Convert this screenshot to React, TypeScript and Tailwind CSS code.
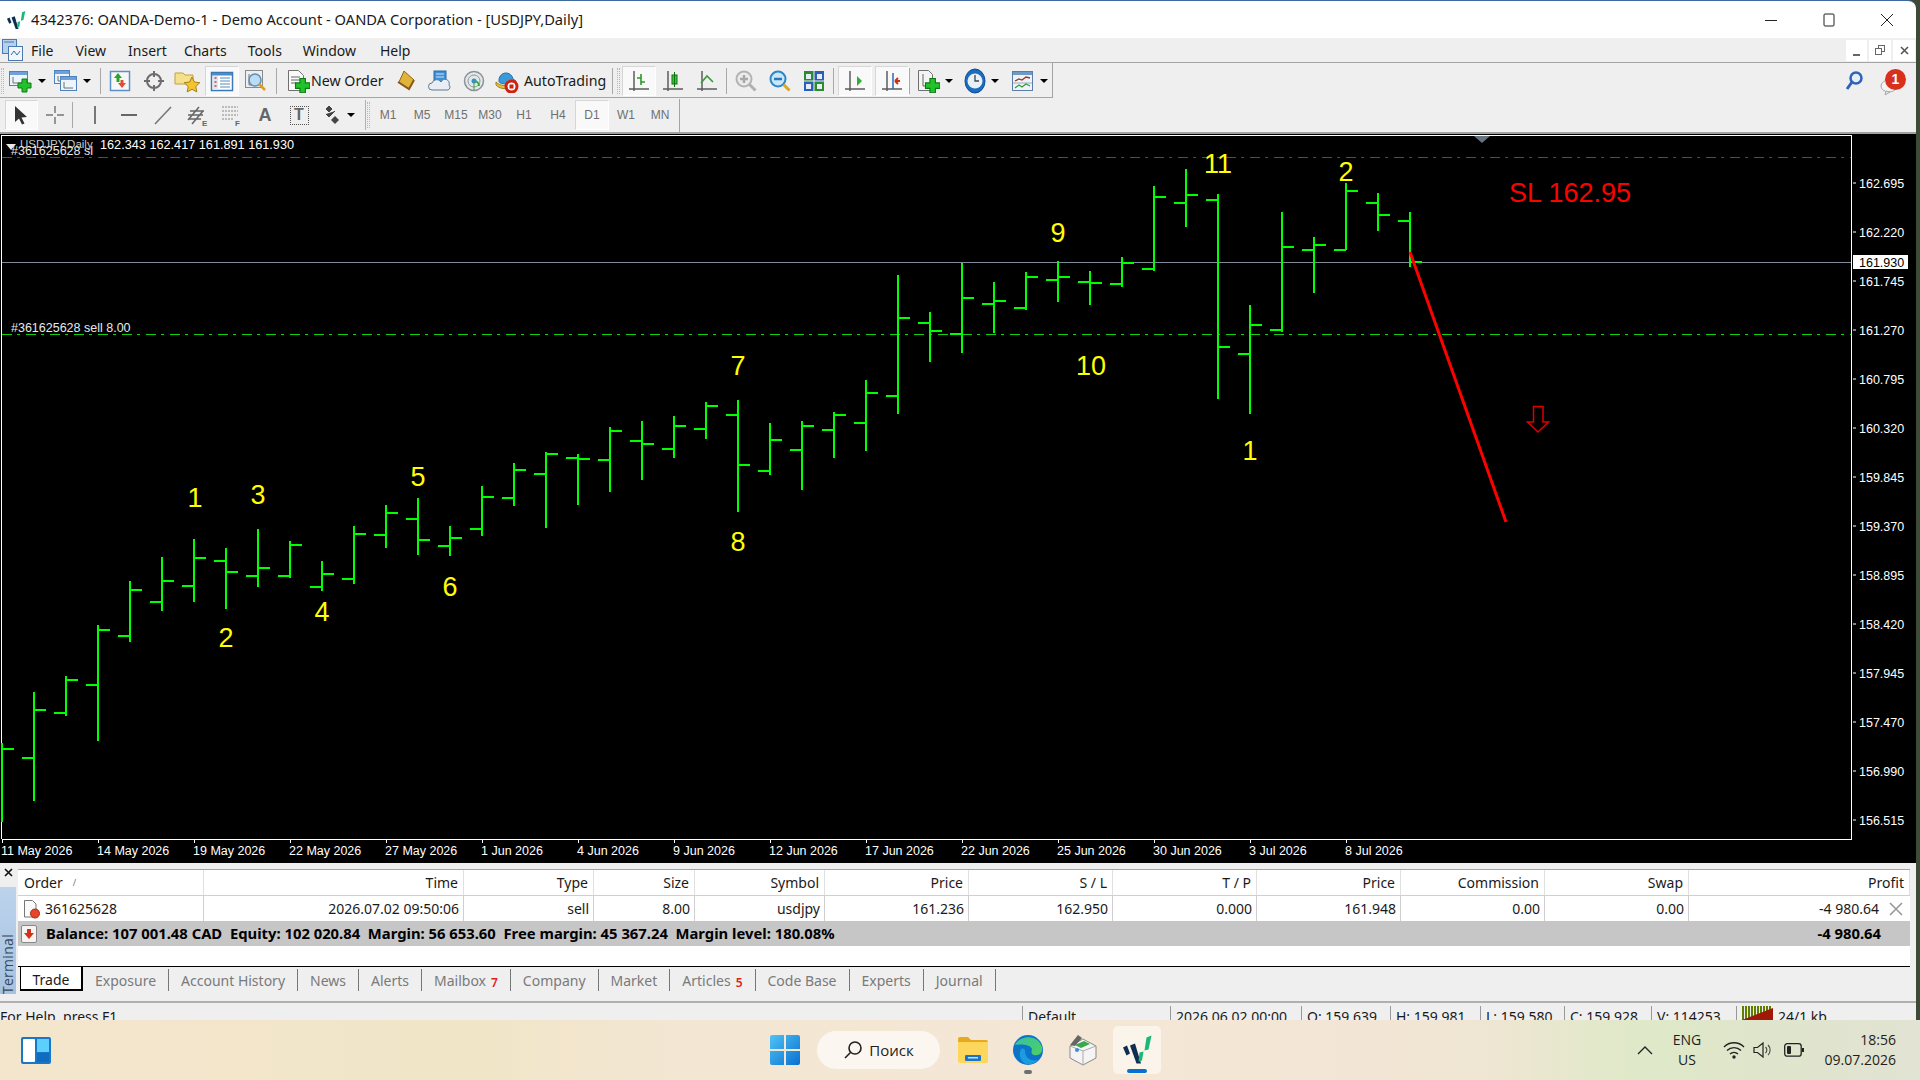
import React from "react";

const BARS: number[][] = [
  [743, 822, 0, 749], [692, 801, 758, 710], [676, 716, 713, 680], [625, 741, 685, 630], [581, 642, 636, 590],
  [557, 611, 602, 581], [539, 602, 586, 558], [548, 609, 561, 572], [529, 587, 576, 568], [541, 578, 576, 545],
  [561, 591, 587, 574], [526, 584, 579, 534], [505, 548, 535, 513], [498, 555, 519, 540], [526, 556, 546, 538],
  [486, 536, 529, 497], [463, 506, 498, 470], [452, 528, 474, 454], [454, 505, 458, 459], [427, 492, 460, 431],
  [421, 480, 441, 444], [416, 458, 449, 426], [402, 439, 429, 406], [400, 512, 415, 465], [423, 475, 471, 440],
  [421, 490, 450, 426], [412, 458, 430, 415], [380, 451, 423, 393], [275, 414, 396, 318], [312, 362, 323, 331],
  [263, 353, 334, 298], [282, 333, 304, 301], [272, 310, 308, 277], [261, 302, 280, 277], [271, 305, 282, 283],
  [257, 287, 284, 263], [186, 271, 269, 197], [169, 227, 203, 195], [194, 399, 200, 347], [305, 414, 354, 325],
  [212, 332, 330, 247], [237, 293, 250, 245], [183, 250, 250, 191], [193, 231, 203, 215], [212, 267, 221, 262],
];
const PRICES = ["162.695", "162.220", "161.745", "161.270", "160.795", "160.320", "159.845", "159.370", "158.895", "158.420", "157.945", "157.470", "156.990", "156.515"];
const DATES = ["11 May 2026", "14 May 2026", "19 May 2026", "22 May 2026", "27 May 2026", "1 Jun 2026", "4 Jun 2026", "9 Jun 2026", "12 Jun 2026", "17 Jun 2026", "22 Jun 2026", "25 Jun 2026", "30 Jun 2026", "3 Jul 2026", "8 Jul 2026"];
const MARKS: [string, number, number][] = [
  ["1", 195, 497], ["3", 258, 494], ["5", 418, 476], ["2", 226, 637], ["4", 322, 611], ["6", 450, 586], ["7", 738, 365], ["8", 738, 541],
  ["9", 1058, 232], ["10", 1091, 365], ["11", 1218, 163], ["1", 1250, 450], ["2", 1346, 171],
];

function Chart() {
  const f = "Liberation Sans, sans-serif";
  return (
    <svg viewBox="0 134 1916 729" width={1916} height={729} className="block">
      <rect x="0" y="134" width="1916" height="729" fill="#000" />
      <path d="M1.5 839V135.5H1851.5V839.5H1.5" fill="none" stroke="#fff" strokeWidth="1" shapeRendering="crispEdges" />
      <path d="M1474 136h16l-8 7z" fill="#66727f" />
      <line x1="2" y1="157.5" x2="1851" y2="157.5" stroke="#e01010" strokeDasharray="10 5 3 6" />
      <line x1="2" y1="334.5" x2="1851" y2="334.5" stroke="#10d010" strokeDasharray="10 5 3 6" />
      <line x1="2" y1="262.5" x2="1851" y2="262.5" stroke="#7f8a9a" />
      <g shapeRendering="crispEdges" fill="#00ff00">
        {BARS.map((b, i) => {
          const x = 2 + 32 * i;
          return (
            <g key={i}>
              <rect x={x - 1} y={b[0]} width="2" height={b[1] - b[0]} />
              {b[2] > 0 && <rect x={x - 12} y={b[2] - 1} width="12" height="2" />}
              <rect x={x} y={b[3] - 1} width="12" height="2" />
            </g>
          );
        })}
      </g>
      <line x1="1410" y1="252" x2="1506" y2="522" stroke="#ff0000" strokeWidth="3" />
      <path d="M1533.5 406.5h9.5v15.5h5.5l-10.5 10-10.5-10h6z" fill="none" stroke="#e00000" strokeWidth="1.5" />
      <path d="M6 144h10l-5 6z" fill="#e8e8e8" />
      <text x="20" y="148" fontFamily={f} fontSize="11.5" fill="#c8c8c8">USDJPY,Daily</text>
      <text x="100" y="149" fontFamily={f} fontSize="12.7" fill="#fff">162.343 162.417 161.891 161.930</text>
      <text x="11" y="155" fontFamily={f} fontSize="12.5" fill="#e8e8e8">#361625628 sl</text>
      <text x="11" y="332" fontFamily={f} fontSize="12.5" fill="#e8e8e8">#361625628 sell 8.00</text>
      {PRICES.map((p, i) => (
        <g key={p}>
          <rect x="1853" y={182.5 + 49 * i} width="3" height="1" fill="#fff" />
          <text x="1859" y={188 + 49 * i} fontFamily={f} fontSize="12.5" fill="#fff">{p}</text>
        </g>
      ))}
      <rect x="1853" y="255" width="55" height="14" fill="#fff" />
      <text x="1859" y="267" fontFamily={f} fontSize="12.5" fill="#000">161.930</text>
      {DATES.map((d, i) => (
        <g key={d}>
          <rect x={2 + 96 * i} y="839" width="1" height="4" fill="#fff" />
          <text x={1 + 96 * i} y="855" fontFamily={f} fontSize="12.5" fill="#fff">{d}</text>
        </g>
      ))}
      {MARKS.map(([t, x, y], i) => (
        <text key={i} x={x} y={y + 10} textAnchor="middle" fontFamily={f} fontSize="27" fill="#ffff00">{t}</text>
      ))}
      <text x="1509" y="202" fontFamily={f} fontSize="27" fill="#ff0000">SL 162.95</text>
    </svg>
  );
}

const Ic = ({ children, w = 24, h = 24 }: { children: React.ReactNode; w?: number; h?: number }) => (
  <svg width={w} height={h} viewBox={`0 0 ${w} ${h}`} className="block shrink-0">{children}</svg>
);
const Plus = ({ x, y, s = 1 }: { x: number; y: number; s?: number }) => (
  <g transform={`translate(${x} ${y}) scale(${s})`}>
    <path d="M4 0h5v4h4v5H9v4H4V9H0V4h4z" fill="#22c22a" stroke="#0b7a12" strokeWidth="1" />
  </g>
);
const Win = ({ x, y, w, h }: { x: number; y: number; w: number; h: number }) => (
  <g>
    <rect x={x + 0.5} y={y + 0.5} width={w} height={h} fill="#eef4fb" stroke="#4d82c0" />
    <rect x={x + 1} y={y + 1} width={w - 1} height="3" fill="#6fa0d8" />
    <path d={`M${x + 4} ${y + 6}v${h - 8}h${w - 7}`} fill="none" stroke="#707070" />
  </g>
);
const Drop = () => <span className="block shrink-0 ml-[5px] w-0 h-0 border-x-[4px] border-x-transparent border-t-[4px] border-t-black" />;

const IconNewChart = () => <Ic><Win x={0} y={2} w={18} h={14} /><Plus x={9} y={10} /></Ic>;
const IconProfiles = () => <Ic><Win x={0} y={1} w={15} h={13} /><Win x={6} y={7} w={16} h={14} /></Ic>;
const IconMarket = () => (
  <Ic><rect x="2.5" y="2.5" width="19" height="19" fill="#f7f7f7" stroke="#5d90c8" strokeWidth="1.5" /><path d="M10 4l4 5h-2.5v4h-3V9H6z" fill="#2aa52a" /><path d="M14 19l-4-5h2.5v-3h3v3H18z" fill="#e05030" /></Ic>
);
const IconCross = () => (
  <Ic><circle cx="12" cy="12" r="7" fill="none" stroke="#6c6c6c" strokeWidth="2" /><path d="M12 2v6M12 16v6M2 12h6M16 12h6" stroke="#6c6c6c" strokeWidth="2" /></Ic>
);
const IconNavigator = () => (
  <Ic w={28}><path d="M1 4h8l2 2h8v9H1z" fill="#f5e18c" stroke="#c0a040" /><path d="M18 8l2.4 5 5.4.7-4 3.8 1 5.4-4.8-2.6-4.8 2.6 1-5.4-4-3.8 5.4-.7z" fill="#f4c430" stroke="#a88010" /></Ic>
);
const IconTerminal = () => (
  <Ic><rect x="1.5" y="3.5" width="21" height="18" fill="#fff" stroke="#3c78b8" strokeWidth="1.5" /><rect x="2" y="4" width="20" height="2.5" fill="#4d8ac8" /><rect x="3" y="7" width="5" height="14" fill="#dde8f4" /><path d="M4.5 9h2M4.5 13h2M4.5 17h2" stroke="#d04030" strokeWidth="1.5" /><path d="M10 9h10M10 12h10M10 15h10M10 18h10" stroke="#5a8cc0" /></Ic>
);
const IconTester = () => (
  <Ic><rect x="1.5" y="1.5" width="17" height="17" fill="#eee" stroke="#8a8a8a" /><path d="M5 5v11h11" fill="none" stroke="#777" /><circle cx="11" cy="11" r="6" fill="#bcdcf4" stroke="#5b8fbf" strokeWidth="1.5" /><path d="M15 15l6 6" stroke="#d8a020" strokeWidth="2.5" /></Ic>
);
const IconOrder = () => (
  <Ic><path d="M2.5 1.5h10l5 5v15h-15z" fill="#fafafa" stroke="#707070" /><path d="M5 8h9M5 11h9M5 14h5" stroke="#666" /><Plus x={9.5} y={9.5} s={1.1} /></Ic>
);
const IconGold = () => (
  <Ic><path d="M10 2l10 9-5 9-10-7z" fill="#e2b33a" stroke="#8a6a18" /><path d="M4 13l11 7 5-9" fill="none" stroke="#8a5a18" strokeWidth="2" /></Ic>
);
const IconSignals = () => (
  <Ic><rect x="6" y="2" width="12" height="13" fill="#3d8fd8" stroke="#2a6aa8" /><path d="M8 5h8M8 8h8" stroke="#cde4f8" /><path d="M4 21a3.5 3.5 0 010-7 5 5 0 019-1 4 4 0 018 3 3 3 0 01-1 5z" fill="#e8eef4" stroke="#5c7a94" /></Ic>
);
const IconRadar = () => (
  <Ic><circle cx="12" cy="12" r="9.5" fill="#e4e8ea" stroke="#8a9296" strokeWidth="1.5" /><circle cx="12" cy="12" r="6" fill="none" stroke="#8a9aa0" /><path d="M12 12A5 5 0 0117 17" fill="none" stroke="#38a838" strokeWidth="2" /><circle cx="12" cy="12" r="2.5" fill="#3a90c8" /><path d="M12 12v9" stroke="#38a838" /></Ic>
);
const IconAuto = () => (
  <Ic w={26}><path d="M5 12a7 7 0 0114-2l3 2c0 4-18 4-17 0z" fill="#3d9ad8" stroke="#2a70a8" /><path d="M2 13c5 5 15 5 20 0v3c-4 5-16 5-20 0z" fill="#e8c040" stroke="#a08020" /><circle cx="17.5" cy="17.5" r="5.5" fill="#fff" stroke="#d02010" strokeWidth="3" /><rect x="15.5" y="15.5" width="4" height="4" fill="#d02010" /></Ic>
);
const Axes = ({ children }: { children?: React.ReactNode }) => (
  <Ic><path d="M7 2v20M2 20h20M7 22v-2" stroke="#5c5c5c" strokeWidth="1.5" fill="none" />{children}</Ic>
);
const IconZoom = ({ plus, blue }: { plus?: boolean; blue?: boolean }) => (
  <Ic><circle cx="10" cy="10" r="7.5" fill={blue ? "#c8e8f8" : "#ececec"} stroke={blue ? "#2c86c8" : "#b4b4b4"} strokeWidth="2" /><path d="M6 10h8" stroke={blue ? "#2c76b8" : "#a8a8a8"} strokeWidth="2.5" />{plus && <path d="M10 6v8" stroke="#a8a8a8" strokeWidth="2.5" />}<path d="M15.5 15.5l6 6" stroke={blue ? "#d8a828" : "#b0b0b0"} strokeWidth="3" /></Ic>
);
const IconTile = () => (
  <Ic><rect x="2" y="2" width="9.5" height="9.5" fill="#2e8a2e" /><rect x="12.5" y="2" width="9.5" height="9.5" fill="#2c5ec0" /><rect x="2" y="12.5" width="9.5" height="9.5" fill="#2c5ec0" /><rect x="12.5" y="12.5" width="9.5" height="9.5" fill="#2e8a2e" /><path d="M4 5h5v5H4zM15 5h5v5h-5zM4 15h5v5H4zM15 15h5v5h-5z" fill="#e4eef8" /></Ic>
);
const IconIndicators = () => (
  <Ic><path d="M2.5 1.5h10l4 4v16h-14z" fill="#f4f4f4" stroke="#707070" /><path d="M7 5v12h8" fill="none" stroke="#666" /><Plus x={9.5} y={9.5} s={1.1} /></Ic>
);
const IconClock = () => (
  <Ic w={22} h={26}><ellipse cx="11" cy="13" rx="10" ry="12" fill="#1c6cc0" stroke="#0e4a90" /><circle cx="11" cy="13" r="7.5" fill="#e8f0f8" /><path d="M11 7v6h4" fill="none" stroke="#444" strokeWidth="1.3" /></Ic>
);
const IconTemplate = () => (
  <Ic><rect x="1.5" y="2.5" width="20" height="19" fill="#eef3f8" stroke="#5a7ea8" /><rect x="2" y="3" width="19" height="3" fill="#6f9ac8" /><path d="M4 12l4-2 3 1 4-3 4 1" fill="none" stroke="#a03020" strokeWidth="1.3" /><path d="M2 14h19" stroke="#9ab" /><path d="M4 19l4-3 3 2 4-3 4 2" fill="none" stroke="#3a9a3a" strokeWidth="1.3" /></Ic>
);
const Logo = ({ w, h }: { w: number; h: number }) => (
  <svg width={w} height={h} viewBox="0 0 30 28" className="block">
    <path d="M1 12l4-2 3 8-3.500 2z" fill="#0f2d52" />
    <path d="M8 10l5-2 6 20h-4.500z" fill="#0f2d52" />
    <path d="M17.500 17l4-1-1.500 9-3.500 1z" fill="#18b878" />
    <path d="M24.500 2l5-2-3 14-4 1z" fill="#18b878" />
  </svg>
);

const grip = <span className="w-[3px] h-[26px] mx-[1px] shrink-0 border-x border-dotted border-[#b8b8b8]" />;
const Btn = ({ children, pressed }: { children: React.ReactNode; pressed?: boolean }) => (
  <span className={`w-[34px] h-[30px] shrink-0 flex items-center justify-center ${pressed ? "bg-[#f9f9f9] border border-[#d6d6d6] border-b-white border-r-white" : ""}`}>{children}</span>
);
const Sep = () => <span className="block w-px h-[26px] bg-[#a8a8a8] shrink-0" />;
const ui = "font-['Noto_Sans',sans-serif]";

const MENU: [string, string][] = [["File", "ml-[8px]"], ["View", "ml-[22px]"], ["Insert", "ml-[22px]"], ["Charts", "ml-[17px]"], ["Tools", "ml-[21px]"], ["Window", "ml-[21px]"], ["Help", "ml-[24px]"]];

function Title() {
  return (
    <div className={`h-[37px] bg-white flex items-center shrink-0 ${ui} text-[14.7px] text-[#1a1a1a]`}>
      <span className="ml-[6px] mr-[5px]"><Logo w={20} h={18} /></span>
      <span>4342376: OANDA-Demo-1 - Demo Account - OANDA Corporation - [USDJPY,Daily]</span>
      <span className="ml-auto flex items-center h-full">
        <span className="w-[58px] flex justify-center"><svg width="12" height="12"><path d="M0 6.5h12" stroke="#222" /></svg></span>
        <span className="w-[58px] flex justify-center"><svg width="12" height="14"><rect x="1" y="1" width="10" height="12" rx="1" fill="none" stroke="#222" /></svg></span>
        <span className="w-[58px] flex justify-center"><svg width="14" height="14"><path d="M1 1l12 12M13 1L1 13" stroke="#222" /></svg></span>
      </span>
    </div>
  );
}

function Menu() {
  return (
    <div className={`h-[25px] bg-[#efefef] border-b border-[#a4a4a4] flex items-center shrink-0 ${ui} text-[14px] text-[#1a1a1a]`}>
      <svg width="21" height="22" viewBox="0 0 21 22" className="ml-[2px] shrink-0">
        <rect x="0.5" y="0.5" width="14" height="14" fill="#b6d0ee" stroke="#4a78b0" />
        <path d="M2 3h10" stroke="#4a78b0" />
        <rect x="6.5" y="7.5" width="14" height="14" fill="#f0f6fc" stroke="#4a78b0" />
        <path d="M9 16l3-4 3 4 3-4" fill="none" stroke="#3a6aa8" />
      </svg>
      {MENU.map(([t, m]) => <span key={t} className={m}>{t}</span>)}
      <span className="ml-auto flex gap-[2px] mr-[1px]">
        <span className="w-[21px] h-[21px] bg-white flex items-end justify-center pb-[5px]"><span className="w-[7px] h-[2px] bg-[#666]" /></span>
        <span className="w-[22px] h-[21px] bg-white flex items-center justify-center"><svg width="10" height="10"><rect x="3.5" y="0.5" width="6" height="6" fill="none" stroke="#666" /><rect x="0.5" y="3.5" width="6" height="6" fill="#fff" stroke="#666" /></svg></span>
        <span className="w-[22px] h-[21px] bg-white flex items-center justify-center"><svg width="9" height="9"><path d="M1 1l7 7M8 1L1 8" stroke="#555" strokeWidth="1.6" /></svg></span>
      </span>
    </div>
  );
}

function ToolbarTop() {
  return (
    <div className="h-[35px] bg-[#efefef] flex shrink-0">
      <div className={`w-[1053px] h-[35px] pt-[1px] border-b border-r border-[#a4a4a4] flex items-center shrink-0 ${ui} text-[14.2px] text-[#1a1a1a]`}>
        <span className="w-[7px] shrink-0 flex">{grip}</span>
        <span className="w-[39px] pl-[2px] flex items-center shrink-0"><IconNewChart /><Drop /></span>
        <span className="w-[38px] ml-[8px] flex items-center shrink-0"><IconProfiles /><Drop /></span>
        <span className="w-[11px] flex justify-end pr-[2px] shrink-0"><Sep /></span>
        <Btn><IconMarket /></Btn><Btn><IconCross /></Btn><Btn><IconNavigator /></Btn>
        <Btn pressed><IconTerminal /></Btn><Btn><IconTester /></Btn>
        <span className="w-[7px] flex justify-center shrink-0"><Sep /></span>
        <span className="w-[101px] ml-[6px] flex items-center shrink-0"><IconOrder /><span className="ml-[1px] whitespace-nowrap">New Order</span></span>
        <span className="ml-[2px] flex"><Btn><IconGold /></Btn><Btn><IconSignals /></Btn><Btn><IconRadar /></Btn></span>
        <span className="w-[115px] flex items-center shrink-0 pl-[3px]"><IconAuto /><span className="ml-[4px] whitespace-nowrap">AutoTrading</span></span>
        <span className="ml-[6px]"><Sep /></span>
        <span className="ml-[3px] w-[6px] flex">{grip}</span>
        <Btn pressed><Axes><path d="M14 5v11M10 9h4M14 13h4" stroke="#2a9a2a" strokeWidth="1.6" /></Axes></Btn>
        <Btn><Axes><rect x="11" y="6" width="5" height="9" fill="#30d030" stroke="#107010" /><path d="M13.5 3v15" stroke="#107010" /></Axes></Btn>
        <Btn><Axes><path d="M6 14l6-7 6 6" fill="none" stroke="#3a9a3a" strokeWidth="1.6" /></Axes></Btn>
        <span className="ml-[2px]"><Sep /></span>
        <span className="ml-[2px] flex"><Btn><IconZoom plus /></Btn><Btn><IconZoom blue /></Btn><Btn><IconTile /></Btn></span>
        <span className="ml-[2px]"><Sep /></span>
        <span className="ml-[4px] flex"><Btn pressed><Axes><path d="M14 7l5 5-5 5z" fill="#30b030" /></Axes></Btn></span>
        <span className="ml-[3px] flex"><Btn pressed><Axes><path d="M13 4v16" stroke="#2a6ab0" strokeWidth="1.5" /><path d="M20 12h-5m0 0l3-3m-3 3l3 3" stroke="#c83010" strokeWidth="1.8" fill="none" /></Axes></Btn></span>
        <Sep />
        <span className="w-[39px] ml-[6px] flex items-center shrink-0"><IconIndicators /><Drop /></span>
        <span className="w-[40px] ml-[9px] flex items-center shrink-0"><IconClock /><Drop /></span>
        <span className="w-[40px] ml-[7px] flex items-center shrink-0"><IconTemplate /><Drop /></span>
      </div>
      <span className="ml-auto flex items-center mr-[8px] gap-[14px]">
        <svg width="20" height="22" viewBox="0 0 20 22"><circle cx="12" cy="8" r="5.5" fill="#e4eef8" stroke="#2f62b8" strokeWidth="2.5" /><path d="M8 12l-5 7" stroke="#2f62b8" strokeWidth="3" /></svg>
        <span className="relative w-[30px] h-[30px] block">
          <svg width="30" height="30" viewBox="0 0 30 30"><ellipse cx="11" cy="20" rx="8" ry="6" fill="#f4f4f4" stroke="#a8a8a8" /><path d="M8 25l-1 4 5-3z" fill="#e8e8e8" stroke="#a8a8a8" /></svg>
          <span className="absolute left-[7px] top-[3px] w-[21px] h-[21px] rounded-full bg-[#d9301e] text-white text-[14px] font-['Liberation_Sans',sans-serif] font-bold flex items-center justify-center">1</span>
        </span>
      </span>
    </div>
  );
}

const TF = ["M1", "M5", "M15", "M30", "H1", "H4", "D1", "W1", "MN"];
function ToolbarBottom() {
  return (
    <div className="h-[36px] bg-[#efefef] border-b-2 border-[#a0a0a0] flex items-center shrink-0 font-['Liberation_Sans',sans-serif]">
      <span className="w-[5px] shrink-0" />
      <span className="w-[33px] h-[30px] shrink-0 flex items-center justify-center pr-[3px] bg-[#f9f9f9] border border-[#d6d6d6] border-b-white border-r-white">
        <Ic w={14} h={20}><path d="M2 1v16l4-3.5 3 6 2.5-1-3-6 5.5-.5z" fill="#333" /></Ic>
      </span>
      <Btn><Ic><path d="M12 3v7M12 14v7M3 12h7M14 12h7" stroke="#777" strokeWidth="1.5" /></Ic></Btn>
      <span className="w-[6px] flex shrink-0"><Sep /></span>
      <Btn><Ic><path d="M12 3v18" stroke="#777" strokeWidth="2" /></Ic></Btn>
      <Btn><Ic><path d="M4 12h16" stroke="#666" strokeWidth="2" /></Ic></Btn>
      <Btn><Ic><path d="M4 21L20 4" stroke="#777" strokeWidth="1.6" /></Ic></Btn>
      <Btn><Ic><path d="M3 17L14 4M7 21L18 8M3 12h15M5 8h14M4 16h12" stroke="#666" strokeWidth="1.5" /><text x="17" y="23" fontSize="8" fontWeight="700" fill="#666">E</text></Ic></Btn>
      <Btn><Ic><path d="M3 4h16M3 8h16M3 12h16M3 16h12" stroke="#888" strokeDasharray="2 1" /><text x="16" y="23" fontSize="8" fontWeight="700" fill="#666">F</text></Ic></Btn>
      <Btn><span className="text-[18px] font-bold text-[#666]">A</span></Btn>
      <Btn><span className="w-[19px] h-[19px] border border-dotted border-[#555] flex items-center justify-center text-[16px] font-bold text-[#666] leading-none">T</span></Btn>
      <span className="w-[44px] flex items-center shrink-0 pl-[8px]"><Ic w={18} h={20}><path d="M5 1l3 3-3 3-3-3zM2 9l3 3 6-6" fill="#444" stroke="#444" /><path d="M11 11l4 4-4 4-4-4z" fill="#444" /></Ic><Drop /></span>
      <span className="w-[5px] shrink-0" />
      <span className="w-px h-[30px] bg-[#b0b0b0] shrink-0" />
      {grip}
      {TF.map((t) => (
        <span key={t} className={`w-[34px] h-[30px] shrink-0 flex items-center justify-center text-[12px] text-[#707070] ${t === "D1" ? "bg-[#f9f9f9] border border-[#d6d6d6] border-b-white border-r-white" : ""}`}>{t}</span>
      ))}
      <span className="w-px h-[33px] bg-[#a4a4a4] ml-[2px]" />
    </div>
  );
}

const COLS = "grid grid-cols-[186px_260px_130px_101px_130px_144px_144px_144px_144px_144px_144px_221px]";
const HEAD = ["Order", "Time", "Type", "Size", "Symbol", "Price", "S / L", "T / P", "Price", "Commission", "Swap", "Profit"];
const ROW = ["2026.07.02 09:50:06", "sell", "8.00", "usdjpy", "161.236", "162.950", "0.000", "161.948", "0.00", "0.00"];
const TABS: [string, string?][] = [["Exposure"], ["Account History"], ["News"], ["Alerts"], ["Mailbox", "7"], ["Company"], ["Market"], ["Articles", "5"], ["Code Base"], ["Experts"], ["Journal"]];

function Terminal() {
  return (
    <div className={`h-[138px] bg-[#efefef] flex shrink-0 ${ui} text-[14px] text-[#1a1a1a]`}>
      <div className="w-[18px] shrink-0 flex flex-col">
        <div className="h-[24px] pt-[5px] pl-[4px]"><svg width="9" height="9"><path d="M1 1l7 7M8 1L1 8" stroke="#111" strokeWidth="1.6" /></svg></div>
        <div className="w-[16px] h-[107px] bg-gradient-to-b from-[#bdd3ec] to-[#a6c2df] flex items-end justify-center">
          <span className="[writing-mode:vertical-rl] rotate-180 text-[#35485e] text-[14px] leading-[16px] tracking-[0.3px] font-['Open_Sans',sans-serif]">Terminal</span>
        </div>
      </div>
      <div className="w-[1892px] shrink-0 flex flex-col pt-[6px]">
        <div className={`${COLS} h-[27px] bg-white border-t border-b border-t-[#a4a4a4] border-b-[#cfcfcf]`}>
          {HEAD.map((h, i) => (
            <div key={i} className={`border-r border-[#e0e0e0] flex items-center ${i === 0 ? "pl-[6px]" : "justify-end pr-[5px]"}`}>
              {h}{i === 0 && <span className="ml-[10px] text-[9px] text-[#777]">/</span>}
            </div>
          ))}
        </div>
        <div className={`${COLS} h-[25px] bg-white`}>
          <div className="border-r border-[#cfcfcf] flex items-center pl-[3px]">
            <svg width="20" height="20" viewBox="0 0 20 20" className="shrink-0"><path d="M3.5 1.5h8l3.500 3.500v13h-11.500z" fill="#fafafa" stroke="#777" /><circle cx="14" cy="14.500" r="4.500" fill="#e8452a" stroke="#a02a14" /></svg>
            <span className="ml-[4px]">361625628</span>
          </div>
          {ROW.map((v, i) => <div key={i} className="border-r border-[#cfcfcf] flex items-center justify-end pr-[4px]">{v}</div>)}
          <div className="flex items-center justify-end pr-[4px]">
            -4 980.64
            <svg width="14" height="14" className="ml-[10px] mr-[3px]"><path d="M1 1l12 12M13 1L1 13" stroke="#999" strokeWidth="1.6" /></svg>
          </div>
        </div>
        <div className="h-[25px] bg-[#c6c6c6] flex items-center font-bold text-[14.8px] text-[#000]">
          <span className="ml-[3px] w-[16px] h-[18px] bg-[#f4f4f4] border border-[#888] rounded-[2px] flex items-center justify-center shrink-0">
            <svg width="10" height="10"><path d="M3 0h4v4h3l-5 6-5-6h3z" fill="#d83018" /></svg>
          </span>
          <span className="ml-[9px] whitespace-pre">{"Balance: 107 001.48 CAD  Equity: 102 020.84  Margin: 56 653.60  Free margin: 45 367.24  Margin level: 180.08%"}</span>
          <span className="ml-auto mr-[29px]">-4 980.64</span>
        </div>
        <div className="h-[21px] bg-white border-b border-black" />
        <div className="h-[26px] flex items-stretch text-[#7a7a7a]">
          <span className="ml-[2px] w-[63px] h-[25px] mt-[-1px] pt-[2px] bg-white border border-black flex items-center justify-center text-[#1a1a1a] border-r-2 border-b-2">Trade</span>
          {TABS.map(([t, n]) => (
            <span key={t} className="flex items-center h-[22px] mt-[2px] pl-[12px] pr-[12px] border-r border-[#777] whitespace-nowrap">
              {t}{n && <span className="ml-[5px] text-[12px] mt-[6px] text-[#e02020] leading-none font-semibold">{n}</span>}
            </span>
          ))}
        </div>
        <div className="flex-1" />
      </div>
    </div>
  );
}

function Status() {
  const cell = "h-full border-l border-[#999] pl-[5px] shrink-0 whitespace-nowrap";
  return (
    <div className={`h-[19px] bg-[#efefef] border-t-2 border-[#b0b0b0] overflow-hidden flex shrink-0 ${ui} text-[14px] text-[#1a1a1a] leading-[19px] pt-[3px]`}>
      <span className="w-[1022px] shrink-0 mt-[1px]">For Help, press F1</span>
      <span className={`${cell} w-[148px]`}><span className="block mt-[1px]">Default</span></span>
      <span className={`${cell} w-[131px]`}><span className="block mt-[1px]">2026.06.02 00:00</span></span>
      <span className={`${cell} w-[89px]`}><span className="block mt-[1px]">O: 159.639</span></span>
      <span className={`${cell} w-[90px]`}><span className="block mt-[1px]">H: 159.981</span></span>
      <span className={`${cell} w-[84px]`}><span className="block mt-[1px]">L: 159.580</span></span>
      <span className={`${cell} w-[87px]`}><span className="block mt-[1px]">C: 159.928</span></span>
      <span className={`${cell} w-[85px]`}><span className="block mt-[1px]">V: 114253</span></span>
      <span className={`${cell} flex`}>
        <svg width="31" height="14" className="shrink-0 mr-[5px]" viewBox="0 0 31 14">
          <path d="M1 0v14M4 0v14M7 0v14M10 0v14M13 0v14M16 0v14M19 0v14M22 0v14M25 0v14M28 0v14" stroke="#5e7f00" strokeWidth="2" />
          <path d="M0 14L31 2V14z" fill="#a01808" />
        </svg>
        <span className="block mt-[1px]">24/1 kb</span>
      </span>
    </div>
  );
}

function Taskbar() {
  return (
    <div className="h-[60px] w-[1920px] shrink-0 flex items-center font-['Open_Sans',sans-serif] text-[#1e1e1e] bg-[linear-gradient(90deg,#f3e6cd_0%,#f1e5c8_25%,#f3e6d2_35%,#f5e7d6_60%,#f3e5d5_72%,#eee6d2_78%,#dfe9c8_85%,#dfe5cc_92%,#e2e3d3_100%)]">
      <span className="ml-[21px] w-[30px] h-[27px] bg-[#1877c8] rounded-[2px] flex p-[2px] gap-[2px] shrink-0">
        <span className="w-[12px] bg-white rounded-[1px]" />
        <span className="flex-1 flex flex-col gap-[1px]"><span className="h-[13px] bg-[#5cd0fa]" /><span className="flex-1 bg-[#0f6cc0]" /></span>
      </span>
      <svg width="30" height="30" viewBox="0 0 30 30" className="ml-[719px] shrink-0">
        <defs><linearGradient id="w" x1="0" y1="0" x2="1" y2="1"><stop offset="0" stopColor="#4fc3f7" /><stop offset="1" stopColor="#0a6fd0" /></linearGradient></defs>
        <path d="M0 2a2 2 0 012-2h12v14H0zM16 0h12a2 2 0 012 2v12H16zM0 16h14v14H2a2 2 0 01-2-2zM16 16h14v12a2 2 0 01-2 2H16z" fill="url(#w)" />
      </svg>
      <span className="ml-[17px] w-[123px] h-[38px] rounded-full bg-[#fbf7f0] flex items-center justify-center shrink-0 text-[15px]">
        <svg width="20" height="20" viewBox="0 0 20 20" className="mr-[6px]"><circle cx="12" cy="8" r="6" fill="none" stroke="#222" strokeWidth="1.6" /><path d="M7.5 12.500L2 18" stroke="#222" strokeWidth="1.6" /></svg>
        Поиск
      </span>
      <svg width="30" height="26" viewBox="0 0 30 26" className="ml-[18px] shrink-0">
        <path d="M0 2a2 2 0 012-2h8l3 3h15a2 2 0 012 2v3H0z" fill="#e8a820" />
        <path d="M0 5h30v19a2 2 0 01-2 2H2a2 2 0 01-2-2z" fill="#fcd75c" />
        <rect x="7" y="18" width="16" height="6" rx="1" fill="#1c74c8" />
        <rect x="10" y="20" width="10" height="1.500" fill="#bfe0fa" />
      </svg>
      <span className="relative ml-[25px] w-[30px] h-[30px] shrink-0 block">
        <svg width="30" height="30" viewBox="0 0 30 30">
          <defs><linearGradient id="e" x1="0" y1="0" x2="1" y2="1"><stop offset="0" stopColor="#38c0a0" /><stop offset="1" stopColor="#50d060" /></linearGradient></defs>
          <circle cx="15" cy="15" r="15" fill="#0c74c8" />
          <path d="M2 10C6 1 24-2 29 12c1 6-3 9-8 8-4-1-2-5-2-6-2-5-12-5-17-4z" fill="url(#e)" />
          <path d="M12 16c0 6 5 11 13 9-3 3-7 5-12 4C8 27 5 20 8 14c1-1 4-1 4 2z" fill="#1c9ce0" />
        </svg>
        <span className="absolute left-[11px] top-[35px] w-[8px] h-[4px] rounded-full bg-[#6f6f6f]" />
      </span>
      <svg width="30" height="32" viewBox="0 0 30 32" className="ml-[25px] shrink-0">
        <path d="M2 12l13-7 13 7v12l-13 7-13-7z" fill="#f4f4f4" stroke="#8a8a8a" />
        <path d="M15 17v14M2 12l13 5 13-5" stroke="#aaa" fill="none" />
        <path d="M7 11l9-4 6 3-9 4z" fill="#3aa84a" />
        <path d="M2 11L10 1l4 3-7 8z" fill="#666" />
        <circle cx="9" cy="16" r="2" fill="#3a90d8" />
      </svg>
      <span className="ml-[15px] w-[48px] h-[48px] rounded-[5px] bg-[#faf4ea] flex flex-col items-center relative shrink-0 pt-[9px]">
        <Logo w={30} h={29} />
        <span className="absolute bottom-[1px] left-[14px] w-[20px] h-[4px] rounded-full bg-[#0a70d0]" />
      </span>
      <svg width="16" height="10" className="ml-[476px] shrink-0"><path d="M1 9l7-7 7 7" fill="none" stroke="#222" strokeWidth="1.3" /></svg>
      <span className="ml-[13px] w-[42px] text-center text-[14px] leading-[20px] shrink-0">ENG<br />US</span>
      <svg width="22" height="18" viewBox="0 0 22 18" className="ml-[15px] shrink-0"><path d="M1 6a14 14 0 0120 0M4 9.500a10 10 0 0114 0M7 13a6 6 0 018 0" fill="none" stroke="#222" strokeWidth="1.4" /><circle cx="11" cy="16" r="1.700" fill="#222" /></svg>
      <svg width="20" height="18" viewBox="0 0 20 18" className="ml-[8px] shrink-0"><path d="M1 6.500h3.500L10 2v14l-5.500-4.500H1z" fill="none" stroke="#222" strokeWidth="1.2" /><path d="M12.500 6a4 4 0 010 6M15 4a7 7 0 010 10" fill="none" stroke="#444" strokeWidth="1.1" /></svg>
      <svg width="20" height="14" viewBox="0 0 20 14" className="ml-[11px] shrink-0"><rect x="0.700" y="0.700" width="16.500" height="12.500" rx="2.500" fill="none" stroke="#222" strokeWidth="1.3" /><rect x="3" y="3" width="4" height="8" rx="1" fill="#222" /><rect x="18" y="5" width="2" height="4" fill="#222" /></svg>
      <span className="ml-auto mr-[24px] text-right text-[14px] leading-[20px] shrink-0">18:56<br />09.07.2026</span>
    </div>
  );
}

export default function App() {
  return (
    <div className="w-[1920px] h-[1080px] overflow-hidden flex flex-col bg-[#3e4a38]">
      <div className="w-[1916px] h-[1020px] shrink-0 flex flex-col overflow-hidden rounded-tr-[8px] border-t border-[#3c6a9e]">
        <Title />
        <Menu />
        <ToolbarTop />
        <ToolbarBottom />
        <div className="bg-black shrink-0"><Chart /></div>
        <Terminal />
        <Status />
      </div>
      <Taskbar />
    </div>
  );
}
